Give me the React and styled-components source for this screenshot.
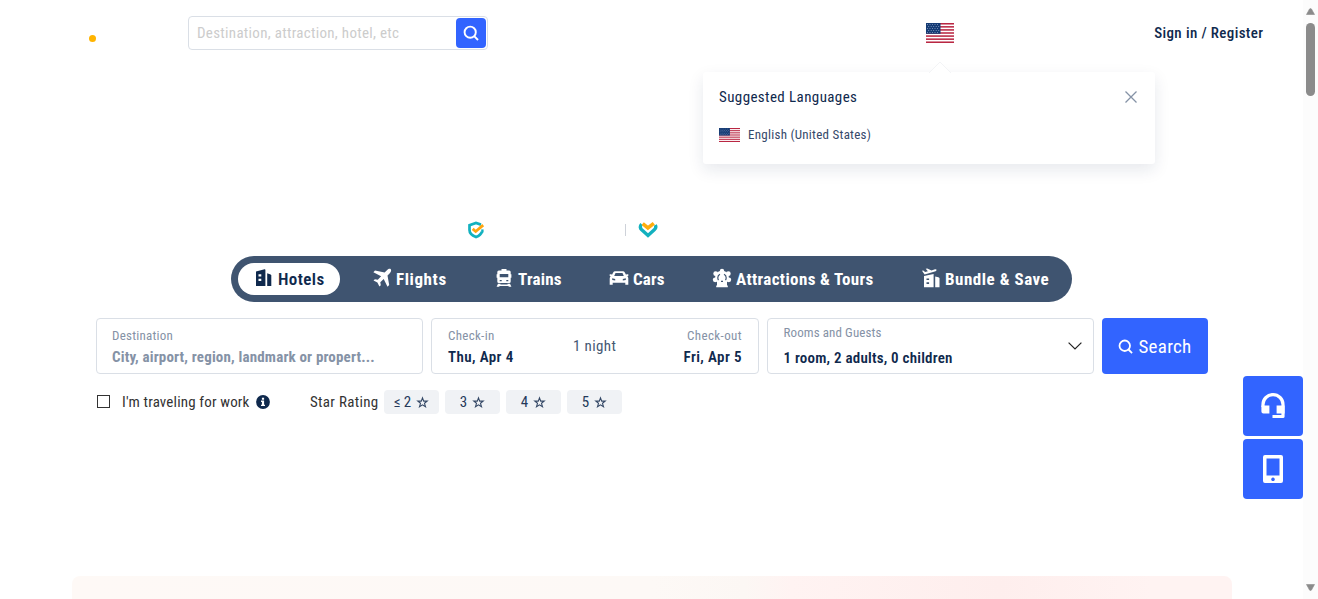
import React from 'react';
import styled, { createGlobalStyle } from 'styled-components';

const navy = '#0f294d';
const blue = '#3264ff';
const muted = '#8592a6';

const GlobalStyle = createGlobalStyle`
  * { box-sizing: border-box; }
  body {
    margin: 0;
    background: #fff;
    overflow: hidden;
    font-family: Roboto, "Liberation Sans", sans-serif;
    font-stretch: 75%;
    color: ${navy};
  }
  button, input { font: inherit; font-stretch: 75%; border: 0; margin: 0; padding: 0; }
`;

const Shell = styled.div`
  display: flex;
  width: 1318px;
  height: 599px;
  overflow: hidden;
`;

const Page = styled.div`
  position: relative;
  width: 1303px;
  height: 599px;
  overflow: hidden;
`;

const Header = styled.header`
  display: flex;
  align-items: center;
  height: 66px;
  padding: 0 39.6px 0 89px;
`;

const LogoDot = styled.span`
  width: 7px;
  height: 7px;
  margin: 11px 92px 0 0;
  border-radius: 50%;
  background: #ffb400;
`;

const SearchBox = styled.div`
  display: flex;
  align-items: center;
  width: 300px;
  height: 34px;
  padding: 0 1px 0 8px;
  border: 1px solid #dadfe6;
  border-radius: 4px;
`;

const SearchInput = styled.input`
  flex: 1;
  min-width: 0;
  height: 30px;
  outline: none;
  background: transparent;
  font-size: 15px;
  letter-spacing: 0.3px;
  &::placeholder { color: #ccc; opacity: 1; }
`;

const SearchIconButton = styled.button`
  display: flex;
  align-items: center;
  justify-content: center;
  width: 30px;
  height: 30px;
  border-radius: 4px;
  background: ${blue};
  color: #fff;
`;

const Locale = styled.div`
  display: flex;
  margin-left: 438px;
`;

const SignIn = styled.a`
  margin-left: auto;
  font-size: 15px;
  font-weight: 500;
  letter-spacing: 0.37px;
  white-space: nowrap;
`;

const Popover = styled.section`
  position: absolute;
  top: 72px;
  left: 703px;
  width: 452px;
  height: 92px;
  padding: 15px 16px;
  border-radius: 3px;
  background: #fff;
  box-shadow: 0 6px 16px rgba(15, 41, 77, 0.1);
`;

const PopoverArrow = styled.svg`
  position: absolute;
  top: -11px;
  left: 225px;
`;

const PopoverHead = styled.div`
  display: flex;
  align-items: center;
  justify-content: space-between;
  height: 20px;
  font-size: 15px;
  letter-spacing: 0.4px;
  padding-right: 1px;
`;

const LanguageRow = styled.div`
  display: flex;
  align-items: center;
  gap: 8px;
  height: 20px;
  margin-top: 18px;
  font-size: 13px;
  letter-spacing: 0.26px;
  color: #35496a;
`;

const LanguageName = styled.span`
  padding-bottom: 2px;
`;

const Badges = styled.div`
  display: flex;
  align-items: center;
  height: 20px;
  margin: 154px 0 0 467px;
`;

const BadgeDivider = styled.span`
  width: 1px;
  height: 12px;
  margin: 0 12px 0 140px;
  background: #ced2d9;
`;

const Tabs = styled.nav`
  display: flex;
  align-items: center;
  gap: 16px;
  width: 841px;
  height: 46px;
  margin: 16px 0 0 231px;
  padding: 0 7px;
  border-radius: 23px;
  background: #3f5470;
`;

const Tab = styled.a`
  display: flex;
  align-items: center;
  gap: 4px;
  height: 32px;
  padding: 0 16px;
  border-radius: 16px;
  background: ${p => (p.$active ? '#fff' : 'transparent')};
  color: ${p => (p.$active ? navy : '#fff')};
  font-size: 17px;
  font-weight: ${p => (p.$active ? 600 : 700)};

  svg { margin-bottom: 2px; }
`;

const TabLabel = styled.span`
  width: ${p => p.$w}px;
  letter-spacing: ${p => p.$ls || 0}px;
  white-space: nowrap;
`;

const Form = styled.form`
  display: grid;
  grid-template-columns: 327px 328px 327px 106px;
  gap: 8px;
  height: 56px;
  margin: 16px 0 0 96px;
`;

const Field = styled.div`
  display: flex;
  align-items: center;
  justify-content: space-between;
  padding: ${p => p.$padding || '0 16px'};
  border: 1px solid #dadfe6;
  border-radius: 4px;
`;

const FieldText = styled.div`
  display: flex;
  flex-direction: column;
  align-items: ${p => (p.$end ? 'flex-end' : 'flex-start')};
  gap: ${p => p.$gap || 0}px;
`;

const FieldLabel = styled.span`
  font-size: 13px;
  line-height: 20px;
  letter-spacing: ${p => p.$ls || 0}px;
  color: ${muted};
`;

const FieldValue = styled.span`
  font-size: 15px;
  line-height: 22px;
  font-weight: ${p => (p.$empty ? 700 : 600)};
  letter-spacing: ${p => p.$ls || 0}px;
  color: ${p => (p.$empty ? muted : navy)};
  white-space: nowrap;
`;

const Nights = styled.span`
  padding: 0 8px 2px 0;
  font-size: 15px;
  line-height: 20px;
  letter-spacing: 0.4px;
  color: #455873;
`;

const SubmitButton = styled.button`
  display: flex;
  align-items: center;
  justify-content: center;
  gap: 5px;
  border-radius: 4px;
  background: ${blue};
  color: #fff;
  font-size: 19px;
  letter-spacing: 0.3px;
`;

const Options = styled.div`
  display: flex;
  align-items: center;
  height: 24px;
  margin: 16px 0 0 97px;
  font-size: 15px;
  color: #333;
`;

const Checkbox = styled.span`
  width: 13px;
  height: 13px;
  margin: 0 11px 2px 0;
  border: 1.5px solid #333;
`;

const WorkLabel = styled.span`
  width: 135px;
  padding-left: 1px;
  letter-spacing: 0.16px;
  white-space: nowrap;
`;

const RatingLabel = styled.span`
  width: 74px;
  margin-left: 40px;
  letter-spacing: 0.3px;
  white-space: nowrap;
`;

const RatingGroup = styled.div`
  display: flex;
  gap: 6px;
`;

const RatingChip = styled.button`
  display: flex;
  align-items: center;
  justify-content: center;
  gap: 5px;
  width: 55px;
  height: 24px;
  border-radius: 4px;
  background: #f0f2f5;
  color: #24395a;
  font-size: 15px;
`;

const Banner = styled.div`
  width: 1160px;
  height: 80px;
  margin: 162px 0 0 72px;
  border-radius: 8px;
  background: linear-gradient(90deg, #fef9f6 0%, #fdf9f6 50%, #fcf7f4 58%, #fff3f2 62%, #feeeed 80%, #fff3f2 93%, #fff3f2 100%);
`;

const FloatingTools = styled.aside`
  position: absolute;
  top: 376px;
  right: 0;
  display: flex;
  flex-direction: column;
  gap: 3px;
`;

const ToolButton = styled.button`
  display: flex;
  align-items: center;
  justify-content: center;
  width: 60px;
  height: 60px;
  border-radius: 4px;
  background: ${blue};
  color: #fff;
`;

const Scrollbar = styled.div`
  display: flex;
  flex-direction: column;
  align-items: center;
  width: 15px;
  padding: 8px 0;
  background: #fcfcfc;
`;

const ScrollThumb = styled.div`
  width: 9px;
  height: 73px;
  margin: 8px 0 auto;
  border-radius: 5px;
  background: #8b8b8b;
`;

const ScrollArrow = ({ down }) => (
  <svg width="9" height="7" viewBox="0 0 9 7">
    <path d={down ? 'M.5 .5h8L5.5 6q-1 1-2 0z' : 'M.5 6.5h8L5.5 1q-1-1-2 0z'} fill="#8b8b8b" stroke="#8b8b8b" strokeWidth=".6" strokeLinejoin="round" />
  </svg>
);

const SearchIcon = ({ size }) => (
  <svg width={size} height={size} viewBox="0 0 16 16" fill="none" stroke="currentColor" strokeWidth="1.9">
    <circle cx="7.2" cy="7.2" r="5.6" />
    <path d="M11.200 11.200 15 15" />
  </svg>
);

const Flag = ({ width, height }) => (
  <svg width={width} height={height} viewBox="0 0 28 20" preserveAspectRatio="none">
    <rect width="28" height="20" fill="#fff" />
    {[0, 1, 2, 3, 4, 5, 6].map(i => (
      <rect key={i} y={i * 3.077} width="28" height="1.54" fill="#b92743" />
    ))}
    <rect width="14.5" height="10.8" fill="#153b74" />
    {[1.4, 3.4, 5.4, 7.4, 9.4].map((y, r) =>
      [1.5, 4, 6.5, 9, 11.5].map(x => (
        <circle key={`${x}-${y}`} cx={x + (r % 2) * 1.2} cy={y} r=".5" fill="#8fa5c8" />
      ))
    )}
  </svg>
);

const Icon = ({ children }) => (
  <svg width="20" height="20" viewBox="0 0 20 20" fill="currentColor">{children}</svg>
);

const HotelIcon = () => (
  <Icon>
    <path fillRule="evenodd" d="M2 3.400 10.600 1.300q.8-.1.800.6V18H2zM4.500 6.200v2.200h2.800V6.200zm0 4.500v2.200h2.800v-2.200z" />
    <path d="M13.200 5.200 16.600 6.500q.7.300.7 1V18h-4.100z" />
  </Icon>
);

const PlaneIcon = () => (
  <Icon>
    <path d="M18.800 1.200c-1-.8-2.600-.2-3.600.8l-2.600 2.500L3 2.600 1.400 4.200l7.700 4.100-3.300 3.500-2.900-.5L1.500 12.600l3.900 2 2 4 1.400-1.400-.5-2.900 3.400-3.300 3.800 7.700 1.700-1.600-1.700-9.600 2.500-2.600c1-1 1.500-2.800.8-3.700z" />
  </Icon>
);

const TrainIcon = () => (
  <Icon>
    <path fillRule="evenodd" d="M7.500 1h5v1.500h2.700q1.500 0 1.500 1.500v2.200h.7v3.500h-.7v3.700q0 1.500-1.500 1.500H4.800q-1.500 0-1.500-1.500V9.700h-.7V6.200h.7V4q0-1.500 1.500-1.500h2.700zM5.700 6v3.300h8.600V6zm0 6v1.200h2V12zm6.600 0v1.200h2V12z" />
    <path d="M4 15.800h2.600l-.3.800h7.400l-.3-.8H16l1.400 3h-2.600l-.4-.8H5.600l-.4.800H2.600z" />
  </Icon>
);

const CarIcon = () => (
  <Icon>
    <path fillRule="evenodd" d="M6.100 3.200h7.800q1.300 0 1.900 1.200l1.200 2.400.7-.6h1.600v1.900l-1 .2q1 .8 1 2.100v6.300h-3v-2H3.700v2h-3v-6.300q0-1.300 1-2.100l-1-.2V6.200h1.600l.7.600 1.200-2.400Q4.800 3.200 6.100 3.200zM6.500 5 5.200 8h9.600l-1.300-3zM3.200 10.300v1.600l3 .5v-1.300zm13.600 0-3 .8v1.300l3-.5z" />
  </Icon>
);

const WheelIcon = () => (
  <Icon>
    <path d="M10 2.800a6.800 6.800 0 0 1 5 11.400v3.300h.8v1.700H4.200v-1.700H5v-3.300A6.800 6.800 0 0 1 10 2.800z" />
    <circle cx="10" cy="3" r="2.200" />
    <circle cx="3.700" cy="5.700" r="2.400" />
    <circle cx="16.300" cy="5.700" r="2.400" />
    <circle cx="3.200" cy="11.800" r="2.400" />
    <circle cx="16.800" cy="11.800" r="2.400" />
    <path d="M8 6.300q-2.200 1-2.200 3.500 0 1.400.7 2.400M12 6.300q2.200 1 2.200 3.500 0 1.400-.7 2.400M9 13.400h2" fill="none" stroke="#3f5470" strokeWidth="1.200" />
  </Icon>
);

const BundleIcon = () => (
  <Icon>
    <path fillRule="evenodd" d="M3 8 12.600 6V19.300H3zM5.500 10.500v1.600h2.600v-1.600zM5.500 14.300v1.600h2.600v-1.600z" />
    <path d="M14.200 8.400 17.400 9.300q1.100.4 1.100 1.300v8.700h-4.300z" />
    <path d="M1 2.800 2.300 2.600 4.100 4l2.800-.7L4.700.8 6.300.4 10.500 2.400 14 1.300q1.300-.2 1.600.5.100 1-1 1.400L3.600 6.600z" />
  </Icon>
);

const ShieldIcon = () => (
  <svg width="18" height="18" viewBox="0 0 18 18" fill="none">
    <path d="M14 3.600 9 2 2.500 4.300v4.800q0 4.500 6.500 7 4.800-2 6-5.400" stroke="#13b1bf" strokeWidth="2.700" />
    <path d="M15.400 8.400v3" stroke="#13b1bf" strokeWidth="2.400" />
    <path d="m5.700 7.900 3 2.600L16.200 4.100" stroke="#ffa50f" strokeWidth="2.800" />
  </svg>
);

const HeartIcon = () => (
  <svg width="20" height="18" viewBox="0 0 20 18" fill="none">
    <path d="M3.600 3.200C1.600 5.300 2.200 7.400 3.700 8.800L10 14.400 16.300 8.800c1.400-1.300 2-3 1-4.800" stroke="#13b1bf" strokeWidth="3.400" />
    <path d="m4.700 2.600 5.200 4.300L15.800 2.400" stroke="#ffad0d" strokeWidth="3.600" />
  </svg>
);

const StarIcon = () => (
  <svg width="13" height="13" viewBox="0 0 13 13" fill="none" stroke="#344866" strokeWidth="1.1" strokeLinejoin="miter">
    <path d="M6.500 1.900 7.700 5.100H11.200L8.500 7.300 9.500 10.800 6.500 8.800 3.500 10.800 4.500 7.300 1.800 5.100H5.300z" />
  </svg>
);

const InfoIcon = () => (
  <svg width="14" height="14" viewBox="0 0 14 14">
    <circle cx="7" cy="7" r="6.900" fill={navy} />
    <path d="M5.900 2.700h2.200v2H5.900zM5 5.600h3.100v4.100H9V11H5V9.700h.9V6.900H5z" fill="#fff" />
  </svg>
);

const HeadsetIcon = () => (
  <svg width="26" height="28" viewBox="0 0 26 28" fill="none">
    <path d="M3 15v-2.500a10 9.900 0 0 1 20 0V24.500H12.500" stroke="#fff" strokeWidth="3.200" strokeLinejoin="round" />
    <path d="M1.400 13.500h8v8H3.400q-2 0-2-2zM16.600 13.500h8v8h-8z" fill="#fff" />
  </svg>
);

const PhoneIcon = () => (
  <svg width="22" height="28" viewBox="0 0 22 28">
    <path fillRule="evenodd" d="M3 0h16q2 0 2 2v24q0 2-2 2H3q-2 0-2-2V2q0-2 2-2zm1.500 3.500v17h13v-17zm6.500 19a1.800 1.800 0 1 0 .01 0z" fill="#fff" />
  </svg>
);

const tabs = [
  { label: 'Hotels', icon: HotelIcon, w: 46, ls: 0.4, active: true },
  { label: 'Flights', icon: PlaneIcon, w: 50, ls: 0.6 },
  { label: 'Trains', icon: TrainIcon, w: 43, ls: 0.2 },
  { label: 'Cars', icon: CarIcon, w: 31, ls: 0.1 },
  { label: 'Attractions & Tours', icon: WheelIcon, w: 137, ls: 0.37 },
  { label: 'Bundle & Save', icon: BundleIcon, w: 104, ls: 0.52 },
];

export default function App() {
  return (
    <>
      <GlobalStyle />
      <Shell>
        <Page>
          <Header>
            <LogoDot />
            <SearchBox>
              <SearchInput placeholder="Destination, attraction, hotel, etc" />
              <SearchIconButton type="button" aria-label="Search"><SearchIcon size={16} /></SearchIconButton>
            </SearchBox>
            <Locale><Flag width={28} height={20} /></Locale>
            <SignIn>Sign in / Register</SignIn>
          </Header>

          <Badges>
            <ShieldIcon />
            <BadgeDivider />
            <HeartIcon />
          </Badges>

          <Tabs>
            {tabs.map(({ label, icon: TabIcon, w, ls, active }) => (
              <Tab key={label} $active={active}>
                <TabIcon />
                <TabLabel $w={w} $ls={ls}>{label}</TabLabel>
              </Tab>
            ))}
          </Tabs>

          <Form>
            <Field $padding="1px 15px 0">
              <FieldText>
                <FieldLabel $ls={0.23}>Destination</FieldLabel>
                <FieldValue $empty $ls={0.17}>City, airport, region, landmark or propert...</FieldValue>
              </FieldText>
            </Field>
            <Field $padding="2px 16px 0">
              <FieldText>
                <FieldLabel $ls={0.3}>Check-in</FieldLabel>
                <FieldValue $ls={0.4}>Thu, Apr 4</FieldValue>
              </FieldText>
              <Nights>1 night</Nights>
              <FieldText $end>
                <FieldLabel $ls={0.38}>Check-out</FieldLabel>
                <FieldValue $ls={0.4}>Fri, Apr 5</FieldValue>
              </FieldText>
            </Field>
            <Field $padding="0 11px 0 15.500px">
              <FieldText $gap={4}>
                <FieldLabel $ls={0.1}>Rooms and Guests</FieldLabel>
                <FieldValue $ls={0.22}>1 room, 2 adults, 0 children</FieldValue>
              </FieldText>
              <svg width="14" height="8" viewBox="0 0 14 8" fill="none" stroke="#222" strokeWidth="1.200"><path d="m.6.6 6.400 6.400 6.400-6.400" /></svg>
            </Field>
            <SubmitButton type="button"><SearchIcon size={15} />Search</SubmitButton>
          </Form>

          <Options>
            <Checkbox />
            <WorkLabel>I'm traveling for work</WorkLabel>
            <InfoIcon />
            <RatingLabel>Star Rating</RatingLabel>
            <RatingGroup>
              {['≤ 2', '3', '4', '5'].map(value => (
                <RatingChip key={value} type="button">{value}<StarIcon /></RatingChip>
              ))}
            </RatingGroup>
          </Options>

          <Banner />

          <Popover>
            <PopoverArrow width="24" height="12" viewBox="0 0 24 12">
              <path d="M1 12 12 1l11 11" fill="#fff" stroke="#f3f4f6" />
            </PopoverArrow>
            <PopoverHead>
              <span>Suggested Languages</span>
              <svg width="14" height="14" viewBox="0 0 14 14" stroke="#8592a6" strokeWidth="1.300"><path d="m1.500 1.500 11 11m0-11-11 11" /></svg>
            </PopoverHead>
            <LanguageRow>
              <Flag width={21} height={14} />
              <LanguageName>English (United States)</LanguageName>
            </LanguageRow>
          </Popover>

          <FloatingTools>
            <ToolButton aria-label="Customer support"><HeadsetIcon /></ToolButton>
            <ToolButton aria-label="App"><PhoneIcon /></ToolButton>
          </FloatingTools>
        </Page>
        <Scrollbar>
          <ScrollArrow />
          <ScrollThumb />
          <ScrollArrow down />
        </Scrollbar>
      </Shell>
    </>
  );
}
